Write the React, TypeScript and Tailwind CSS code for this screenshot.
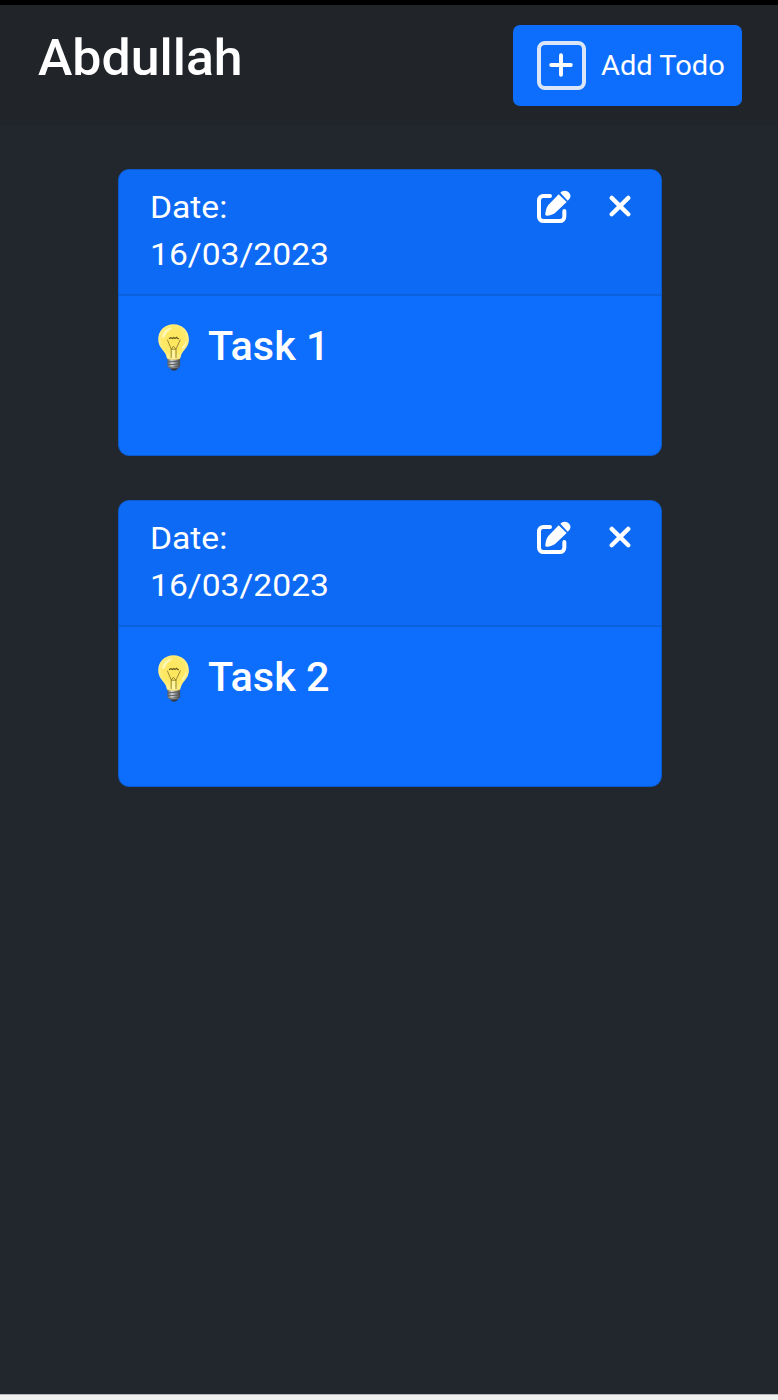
function EditIcon() {
  return (
    <svg viewBox="18 27 105 105" className="size-[35px]" aria-hidden="true">
      <path
        d="M60 48H40a13 13 0 0 0-13 13v49a13 13 0 0 0 13 13h50a13 13 0 0 0 13-13V93"
        fill="none"
        stroke="currentColor"
        strokeWidth="12"
        strokeLinecap="round"
      />
      <path
        d="M86 43l24 23-34 32c-7 5-16 8-25 9-4 0-6-2-5-5 1-9 3-19 9-27z"
        fill="currentColor"
      />
      <path d="M91 38c5-6 15-8 23-3 8 5 10 16 4 22l-5 5z" fill="currentColor" />
    </svg>
  );
}

function CloseIcon() {
  return (
    <svg viewBox="0 0 22 22" className="mt-[6px] size-[22px]" aria-hidden="true">
      <path d="M2.7 2.9l16.6 16.4M19.3 2.9L2.7 19.3" stroke="currentColor" strokeWidth="4.3" strokeLinecap="round" />
    </svg>
  );
}

function PlusIcon() {
  return (
    <svg viewBox="0 0 26 26" className="mr-px mb-[2px] size-[26px] shrink-0" aria-hidden="true">
      <path d="M13 3.2v19.6M3.2 13h19.6" stroke="currentColor" strokeWidth="3.9" strokeLinecap="round" />
    </svg>
  );
}

function Bulb() {
  return (
    <svg viewBox="0 0 33 48" className="h-[48px] w-[33px] shrink-0" aria-hidden="true">
      <defs>
        <radialGradient id="glass" cx="0.5" cy="0.45" r="0.58">
          <stop offset="0" stopColor="#ffe65a" />
          <stop offset="0.65" stopColor="#fde968" />
          <stop offset="0.88" stopColor="#fff08f" />
          <stop offset="1" stopColor="#dfc455" />
        </radialGradient>
        <linearGradient id="metal" x1="0" x2="1" y1="0" y2="0">
          <stop offset="0" stopColor="#5e6164" />
          <stop offset="0.35" stopColor="#d4d6d4" />
          <stop offset="0.6" stopColor="#96999b" />
          <stop offset="1" stopColor="#414448" />
        </linearGradient>
      </defs>
      <path d="M12.5 43.5h9l-2 2.4q-2.5 1-5 0z" fill="#34373b" />
      <path d="M10.5 34.5h12.6v7.8l-2.2 2h-8.2l-2.2-2z" fill="url(#metal)" />
      <path d="M10.5 38l12.6-1M10.7 40.9l12.2-1M12 43.5l10-1" stroke="#55585b" strokeWidth="0.9" />
      <path
        d="M16.5 .3C7.7.3 1.2 6.9 1.2 15.3c0 6.9 4.3 10.2 6.7 13.6 1.8 2.6 1.5 4.6 2.3 5.8 1.4 1.4 11.3 1.4 12.8 0 .9-1.2.5-3.2 2.2-5.8 2.3-3.4 6.7-6.7 6.7-13.6C31.9 6.9 25.3.3 16.5.3z"
        fill="url(#glass)"
      />
      <path d="M5 13C6 7.2 10 4 15 3.5c-1 3-5 3.5-6.5 8-.6 2-2.6 3-3.5 1.5z" fill="#fffbd0" opacity="0.75" />
      <path d="M25 23c2-2 3.5-4 4-7 1 4-1 7-4 10z" fill="#fff9c4" opacity="0.8" />
      <path d="M14.8 26h3.4v8.5h-3.4z" fill="#fff6ad" opacity="0.8" />
      <path
        d="M14.2 34v-9L10.3 15.6M19 34v-9l4.4-9.4M14.2 25.2l2.2-3 2.6 3z"
        fill="none"
        stroke="#8d7d2c"
        strokeWidth="0.9"
      />
      <path
        d="M12 14.6l2-1 1.3.9 1.5-1 1.2.9 1.6-1.1.9 1.1 1.4.2"
        fill="none"
        stroke="#655a20"
        strokeWidth="1.2"
      />
    </svg>
  );
}

function TodoCard({ title, date }: { title: string; date: string }) {
  return (
    <article className="flex h-[287px] shrink-0 flex-col overflow-hidden rounded-[11px] border border-[#0b59cb] bg-[#0d6efd]">
      <header className="flex h-[126px] shrink-0 justify-between border-b-2 border-[#0b60dc] bg-[#0d6af4] pt-[14px] pr-[30.5px] pl-[31px]">
        <p className="w-[190px] origin-left scale-x-[1.045] text-[32.2px] leading-[47.3px]">
          Date: <br />
          {date}
        </p>
        <div className="flex items-start gap-[38px] pt-[5px]">
          <button type="button" aria-label="Edit">
            <EditIcon />
          </button>
          <button type="button" aria-label="Delete">
            <CloseIcon />
          </button>
        </div>
      </header>
      <div className="flex items-start gap-[18px] pt-[28px] pl-[38px]">
        <Bulb />
        <h2 className="origin-left scale-x-[1.035] text-[40px] leading-[46px] font-medium">{title}</h2>
      </div>
    </article>
  );
}

const todos = [
  { title: "Task 1", date: "16/03/2023" },
  { title: "Task 2", date: "16/03/2023" },
];

export default function App() {
  return (
    <div className="flex h-[1400px] w-full flex-col border-t-[5px] border-b-[5px] border-t-black border-b-[#f1f1f1] bg-[#22272e] font-[Roboto,sans-serif] text-white">
      <nav className="flex h-[121px] shrink-0 items-start justify-between bg-[#212529] pt-[20px] pr-[36px] pl-[38px]">
        <h1 className="origin-left scale-x-[1.03] pt-[2px] text-[50.3px] leading-[61px] font-medium">Abdullah</h1>
        <button type="button" className="flex h-[81px] w-[229px] items-center rounded-[7px] bg-[#0d6efd] pl-[24px]">
          <span className="flex size-[49px] shrink-0 items-center justify-center rounded-[8px] border-4 border-[#dbe5f8]">
            <PlusIcon />
          </span>
          <span className="ml-[15px] origin-left scale-x-[1.03] text-[28.2px] leading-[42px] whitespace-nowrap">
            Add Todo
          </span>
        </button>
      </nav>
      <main className="flex flex-1 flex-col gap-[43.5px] border-b border-[#b5b7ba] pt-[43px] pr-[116px] pl-[118px]">
        {todos.map((todo) => (
          <TodoCard key={todo.title} {...todo} />
        ))}
      </main>
    </div>
  );
}
